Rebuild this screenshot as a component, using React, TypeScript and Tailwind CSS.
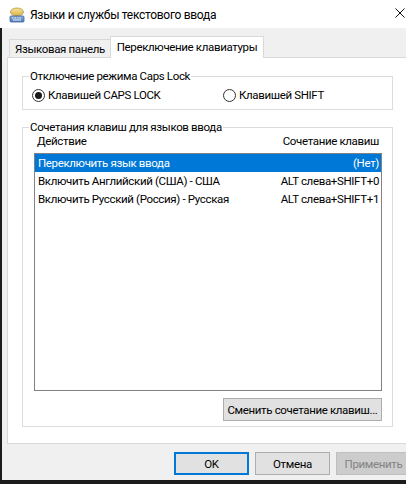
import React from "react";

function AppIcon() {
  return (
    <svg width="16" height="16" viewBox="0 0 16 16">
      <defs>
        <linearGradient id="bub" x1="0" y1="0" x2="0" y2="1">
          <stop offset="0" stopColor="#f7e39a" />
          <stop offset="1" stopColor="#d9b24a" />
        </linearGradient>
        <linearGradient id="kb" x1="0" y1="0" x2="0" y2="1">
          <stop offset="0" stopColor="#8fb0dc" />
          <stop offset="1" stopColor="#4f79b5" />
        </linearGradient>
      </defs>
      <ellipse cx="8" cy="5" rx="6.5" ry="4" fill="url(#bub)" stroke="#b99237" strokeWidth="0.8" />
      <rect x="1" y="9" width="14" height="6" rx="1" fill="url(#kb)" stroke="#3f659c" strokeWidth="0.8" />
      <g fill="#e8f0fb">
        <rect x="3" y="10.5" width="1.5" height="1" />
        <rect x="5.5" y="10.5" width="1.5" height="1" />
        <rect x="8" y="10.5" width="1.5" height="1" />
        <rect x="10.5" y="10.5" width="1.5" height="1" />
        <rect x="4" y="12.5" width="8" height="1" />
      </g>
    </svg>
  );
}

function Radio({ checked }: { checked?: boolean }) {
  return (
    <span className="w-[13px] h-[13px] rounded-full border border-[#333333] bg-white flex items-center justify-center shrink-0">
      {checked && <span className="w-[7px] h-[7px] rounded-full bg-[#1a1a1a]" />}
    </span>
  );
}

export default function App() {
  const rows = [
    { a: "Переключить язык ввода", b: "(Нет)", sel: true },
    { a: "Включить Английский (США) - США", b: "ALT слева+SHIFT+0" },
    { a: "Включить Русский (Россия) - Русская", b: "ALT слева+SHIFT+1" },
  ];
  return (
    <div className="w-[406px] h-[484px] overflow-hidden flex flex-col bg-white text-[11.5px] leading-[14px] tracking-[-0.35px] whitespace-nowrap text-black font-['Roboto',sans-serif]">
      {/* title bar */}
      <div className="h-[28px] shrink-0 flex items-center bg-white">
        <div className="ml-[9px] mt-[1px]">
          <AppIcon />
        </div>
        <span className="ml-[5px] mt-[2px] text-[12px] tracking-[-0.3px]">Языки и службы текстового ввода</span>
        <div className="ml-auto mr-[1px] -mt-[2px]">
          <svg width="10" height="10" viewBox="0 0 10 10">
            <path d="M0.5 0.5 L9.5 9.5 M9.5 0.5 L0.5 9.5" stroke="#111" strokeWidth="1" />
          </svg>
        </div>
      </div>

      {/* client area */}
      <div className="flex-1 flex flex-col bg-[#f0f0f0] border-l-2 border-[#1c1c1c]">
        {/* tabs */}
        <div className="h-[29px] shrink-0 flex items-end pl-[7px]">
          <div className="w-[102px] h-[18px] border border-b-0 border-[#d9d9d9] bg-[#f0f0f0] flex items-center justify-center">
            Языковая панель
          </div>
          <div className="relative z-10 -ml-px -mb-px w-[154px] h-[22px] border border-b-0 border-[#d9d9d9] bg-white flex items-center justify-center pb-[1px]">
            Переключение клавиатуры
          </div>
        </div>

        {/* panel */}
        <div className="ml-[5px] w-[420px] h-[387px] shrink-0 border border-[#d9d9d9] bg-white pl-[14px] pt-[11px]">
          <fieldset className="w-[371px] border border-[#dcdcdc] pl-[6px] pb-[7px]">
            <legend className="px-[1px]">Отключение режима Caps Lock</legend>
            <div className="flex items-center h-[14px] mt-[5px] pl-[3px]">
              <div className="w-[191px] flex items-center">
                <Radio checked />
                <span className="ml-[3px]">Клавишей CAPS LOCK</span>
              </div>
              <div className="flex items-center">
                <Radio />
                <span className="ml-[3px]">Клавишей SHIFT</span>
              </div>
            </div>
          </fieldset>

          <fieldset className="mt-[10px] w-[371px] border border-[#dcdcdc] pl-[6px] pb-[5px]">
            <legend className="px-[1px]">Сочетания клавиш для языков ввода</legend>
            <div className="pl-[5px] w-[353px]">
              <div className="w-[348px] h-[14px] flex justify-between px-[3px]">
                <span>Действие</span>
                <span>Сочетание клавиш</span>
              </div>
              <div className="mt-[5px] w-[348px] h-[238px] border border-[#828282] bg-white">
                {rows.map((r) => (
                  <div
                    key={r.a}
                    className={
                      r.sel
                        ? "h-[18px] flex items-center justify-between pl-[3px] pr-[2px] bg-[#0078d7] text-white"
                        : "h-[18px] flex items-center justify-between pl-[3px] pr-[2px]"
                    }
                  >
                    <span>{r.a}</span>
                    <span>{r.b}</span>
                  </div>
                ))}
              </div>
              <div className="w-[348px] flex justify-end mt-[7px]">
                <div className="w-[159px] h-[23px] border border-[#adadad] bg-[#e1e1e1] flex items-center justify-center">
                  Сменить сочетание клавиш...
                </div>
              </div>
            </div>
          </fieldset>
        </div>

        {/* buttons */}
        <div className="flex-1 flex items-start pt-[8px] pl-[172px] gap-[6px]">
          <div className="w-[75px] h-[23px] shrink-0 border-2 border-[#0078d7] bg-[#e1e1e1] flex items-center justify-center">
            OK
          </div>
          <div className="w-[75px] h-[23px] shrink-0 border border-[#adadad] bg-[#e1e1e1] flex items-center justify-center">
            Отмена
          </div>
          <div className="w-[75px] h-[23px] shrink-0 border border-[#bfbfbf] bg-[#cccccc] text-[#838383] flex items-center justify-center">
            Применить
          </div>
        </div>
      </div>
      <div className="h-[4px] shrink-0 bg-[#1c1c1c]" />
    </div>
  );
}
